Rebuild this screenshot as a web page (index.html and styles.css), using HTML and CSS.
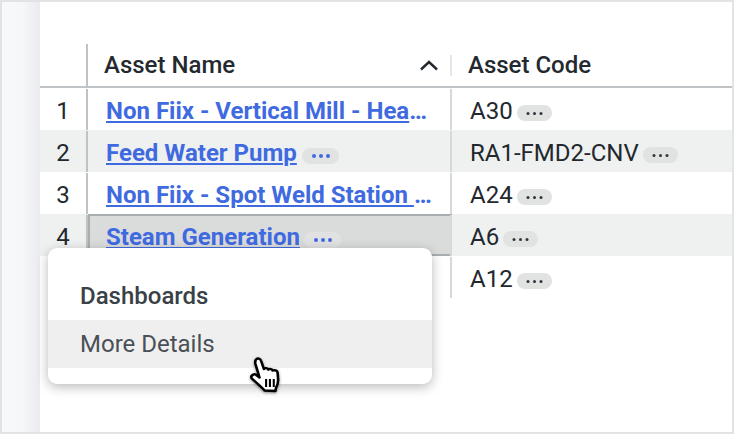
FILE: index.html
```html
<!DOCTYPE html>
<html lang="en">
<head>
<meta charset="utf-8">
<title>Assets</title>
<link rel="stylesheet" href="styles.css">
</head>
<body>
<div class="frame">
  <div class="rail"></div>
  <div class="main">
    <div class="row head">
      <div class="idx"></div>
      <div class="name"><span>Asset Name</span>
        <svg class="chev" width="18" height="11" viewBox="0 0 18 11"><path d="M1 9.5 L9 2 L17 9.5" fill="none" stroke="#23292e" stroke-width="2.4"/></svg>
      </div>
      <div class="code"><span>Asset Code</span></div>
    </div>
    <div class="row">
      <div class="idx">1</div>
      <div class="name"><div class="clip"><a href="#">Non Fiix - Vertical Mill - Heat Treatment Line</a></div></div>
      <div class="code">A30<span class="pill"></span></div>
    </div>
    <div class="row alt">
      <div class="idx">2</div>
      <div class="name"><div class="clip"><a href="#">Feed Water Pump</a><span class="pill blue"></span></div></div>
      <div class="code">RA1-FMD2-CNV<span class="pill wide"></span></div>
    </div>
    <div class="row">
      <div class="idx">3</div>
      <div class="name"><div class="clip"><a href="#">Non Fiix - Spot Weld Station - Line Four Cell</a></div></div>
      <div class="code">A24<span class="pill"></span></div>
    </div>
    <div class="row alt">
      <div class="idx">4</div>
      <div class="name selected"><div class="clip"><a href="#">Steam Generation</a><span class="pill blue"></span></div></div>
      <div class="code">A6<span class="pill"></span></div>
    </div>
    <div class="row">
      <div class="idx"></div>
      <div class="name"></div>
      <div class="code">A12<span class="pill"></span></div>
    </div>
  </div>
  <div class="menu">
    <div class="menu-title">Dashboards</div>
    <div class="menu-item">More Details</div>
  </div>
  <svg class="cursor" width="34" height="40" viewBox="0 0 31 40" preserveAspectRatio="none">
    <path d="M7 4 C8.5 1.5 11.5 2.5 12 5 L14.5 13 C15.5 11.5 18 12 18.5 13.5 C20 12.5 22 13 22.5 14.5 C24 13.8 26.5 14.5 27 16.5 L27.5 24 C27.5 28 26.5 30 25.5 32 L25 35 L15 34.5 C14 32.5 11 30 9 28 L3.5 22.5 C2 20.5 4.5 17.5 7 18.5 L10.5 21.5 L6.8 8 C6.5 6.5 6.4 5.5 7 4 Z" fill="#fff" stroke="#000" stroke-width="2.4" stroke-linejoin="round"/>
    <path d="M16.5 23 V31 M20 23 V31 M23.5 23 V31" stroke="#000" stroke-width="1.9" fill="none"/>
  </svg>
</div>
</body>
</html>
```

FILE: styles.css
```css
* { box-sizing: border-box; }
html, body { margin: 0; padding: 0; }
body { width: 734px; height: 434px; overflow: hidden; background: #fff; font-family: Roboto, "Liberation Sans", sans-serif; }
.frame { position: relative; width: 734px; height: 434px; border: 2px solid #e3e3e3; display: flex; overflow: hidden; background: #fff; }
.rail { width: 38px; flex: none; background: linear-gradient(to right, #f8f9fa 0%, #f6f7f9 55%, #e9ebee 100%); }
.main { flex: 1; padding-top: 42px; min-width: 0; }

.row { display: grid; grid-template-columns: 48px 364px 1fr; height: 42px; align-items: stretch; color: #22282d; font-size: 24px; }
.row.alt { background: #eff1f0; }
.row.head { height: 44px; font-weight: 500; font-size: 24px; color: #23292e; border-bottom: 2px solid #c0c4c7; }

.idx { display: flex; align-items: center; justify-content: center; border-right: 2px solid #bfc3c6; margin-top: 1px; padding-top: 3px; }
.name { display: flex; align-items: center; padding-left: 16px; padding-right: 20px; min-width: 0; margin-top: 1px; padding-top: 3px; }
.code { display: flex; align-items: center; padding-left: 18px; border-left: 2px solid #d6d9dc; margin-left: -2px; margin-top: 1px; padding-top: 2px; }
.row > .code { width: calc(100% + 2px); }

.head .idx, .head .name, .head .code { margin-top: 0; padding-top: 0; }
.head .name { justify-content: space-between; padding-right: 14px; }
.head .code { border-left: 0; position: relative; padding-left: 18px; }
.head .code::before { content: ""; position: absolute; left: 0; top: 11px; height: 21px; width: 2px; background: #e4e6e8; }
.chev { flex: none; }

.clip { flex: 1; min-width: 0; white-space: nowrap; overflow: hidden; text-overflow: ellipsis; font-weight: 700; color: #3f6ae0; padding-left: 2px; line-height: 32px; }
a { color: #3f6ae0; text-decoration: underline; text-decoration-thickness: 2px; text-underline-offset: 2px; font-weight: 700; }

.pill { display: inline-block; width: 35px; height: 16px; margin-left: 4px; border-radius: 8px; background: #e1e2e2; vertical-align: middle; position: relative; top: 2px; }
.pill::before { content: ""; position: absolute; left: 16px; top: 7px; width: 3px; height: 3px; border-radius: 50%; background: #30363b; box-shadow: -6.5px 0 0 #30363b, 6.5px 0 0 #30363b; }
.name .pill { top: 1px; margin-left: 5px; }
.pill.blue { width: 37px; }
.pill.blue::before { left: 17px; top: 6px; width: 4px; height: 4px; background: #3f6ae0; box-shadow: -7px 0 0 #3f6ae0, 7px 0 0 #3f6ae0; }
.selected { margin-top: 0; padding-top: 4px; background: #dadcdb; border: 2px solid #a9aeb1; padding-left: 14px; }
.selected .pill { background: #e0e1e0; margin-left: 4px; }

.menu { position: absolute; left: 46px; top: 246px; width: 384px; height: 136px; background: #fff; border-radius: 9px; box-shadow: 0 3px 12px rgba(0,0,0,.28); padding-top: 32px; }
.menu-title { height: 40px; padding-left: 32px; font-size: 24px; font-weight: 500; color: #3a4146; line-height: 32px; }
.menu-item { height: 48px; padding-left: 32px; font-size: 24px; color: #4a5056; background: #efefef; line-height: 48px; }
.cursor { position: absolute; left: 246px; top: 354px; filter: drop-shadow(0 1px 1.5px rgba(0,0,0,.45)); }
```
